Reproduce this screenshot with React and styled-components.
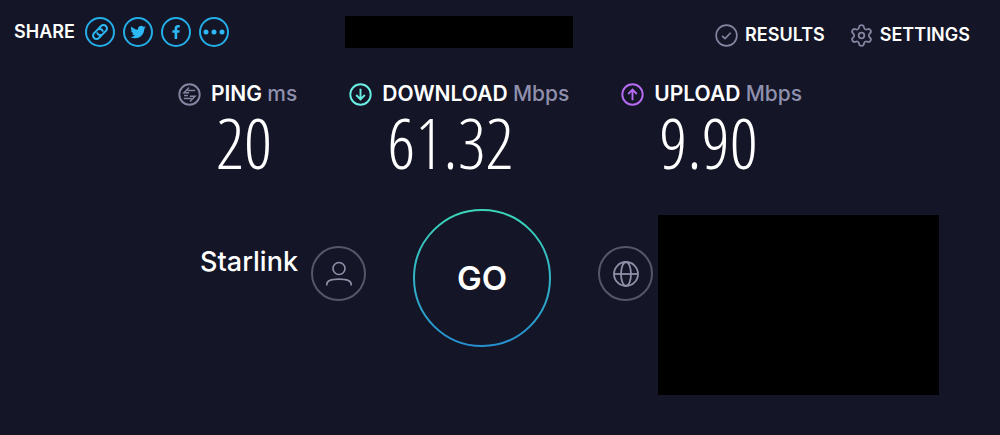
import React from "react";
import styled, { createGlobalStyle } from "styled-components";

const GlobalStyle = createGlobalStyle`
  * {
    box-sizing: border-box;
  }

  body {
    margin: 0;
    background-color: #141526;
    color: #fff;
    font-family: Inter, "Liberation Sans", sans-serif;
  }
`;

const shareLinks = [
  { label: "Copy link", icon: <LinkIcon /> },
  { label: "Twitter", icon: <TwitterIcon /> },
  { label: "Facebook", icon: <FacebookIcon /> },
  { label: "More", icon: <DotsIcon /> },
];

const metrics = [
  { name: "PING", unit: "ms", value: "20", color: "#8485a0", icon: <PingArrows /> },
  { name: "DOWNLOAD", unit: "Mbps", value: "61.32", color: "#6aefe3", icon: <DownArrow /> },
  { name: "UPLOAD", unit: "Mbps", value: "9.90", color: "#b56bf2", icon: <UpArrow /> },
];

export default function App() {
  return (
    <>
      <GlobalStyle />
      <Page>
        <Header>
          <Share>
            <ShareTitle>SHARE</ShareTitle>
            {shareLinks.map(({ label, icon }) => (
              <ShareButton key={label} type="button" aria-label={label}>
                {icon}
              </ShareButton>
            ))}
          </Share>
          <ResultId />
          <Nav>
            <NavLink href="#results">
              <CheckIcon />
              RESULTS
            </NavLink>
            <NavLink href="#settings">
              <GearIcon />
              SETTINGS
            </NavLink>
          </Nav>
        </Header>

        <Metrics>
          {metrics.map(({ name, unit, value, color, icon }) => (
            <Metric key={name}>
              <MetricLabel>
                <MetricIcon viewBox="0 0 23 23" $color={color}>
                  <circle cx="11.5" cy="11.5" r="10.2" />
                  {icon}
                </MetricIcon>
                <span>
                  {name} <Unit>{unit}</Unit>
                </span>
              </MetricLabel>
              <Value>{value}</Value>
            </Metric>
          ))}
        </Metrics>

        <Connection>
          <Provider>
            <ProviderName>Starlink</ProviderName>
            <Badge>
              <UserIcon />
            </Badge>
          </Provider>
          <GoButton type="button">
            <GoRing />
            GO
          </GoButton>
          <Server>
            <Badge>
              <GlobeIcon />
            </Badge>
            <ServerDetails />
          </Server>
        </Connection>
      </Page>
    </>
  );
}

function LinkIcon() {
  return (
    <svg width="30" height="30" viewBox="0 0 30 30" fill="none" stroke="currentColor">
      <g transform="rotate(-45 15 15)" strokeWidth="2" strokeLinecap="round">
        <path d="M13.5 18.4H10a3.4 3.4 0 0 1 0-6.8h4.6a3.4 3.4 0 0 1 3.1 4.6" />
        <path d="M16.5 11.6H20a3.4 3.4 0 0 1 0 6.8h-4.6a3.4 3.4 0 0 1-3.1-4.6" />
      </g>
    </svg>
  );
}

function TwitterIcon() {
  return (
    <svg width="30" height="30" viewBox="0 0 30 30" fill="currentColor">
      <path
        transform="translate(7.4 7.4) scale(.64)"
        d="M23.95 4.57a10 10 0 0 1-2.82.77 4.96 4.96 0 0 0 2.16-2.72c-.95.55-2 .95-3.13 1.18a4.92 4.92 0 0 0-8.38 4.48C7.69 8.1 4.07 6.13 1.64 3.16a4.92 4.92 0 0 0 1.52 6.57 4.9 4.9 0 0 1-2.23-.61v.06a4.92 4.92 0 0 0 3.95 4.83 5 5 0 0 1-2.21.08 4.94 4.94 0 0 0 4.6 3.42A9.87 9.87 0 0 1 0 19.54a14 14 0 0 0 7.55 2.21c9.05 0 14-7.5 14-13.98 0-.21 0-.42-.02-.63a9.94 9.94 0 0 0 2.42-2.57z"
      />
    </svg>
  );
}

function FacebookIcon() {
  return (
    <svg width="30" height="30" viewBox="0 0 30 30" fill="currentColor">
      <path d="M13.6 22v-6.2h-2.2v-2.5h2.2v-1.7c0-2.3 1.3-3.5 3.4-3.5.9 0 1.6.1 1.8.1v2.2h-1.3c-1 0-1.3.5-1.3 1.3v1.6h2.5l-.4 2.5h-2.1V22z" />
    </svg>
  );
}

function DotsIcon() {
  return (
    <svg width="30" height="30" viewBox="0 0 30 30" fill="currentColor">
      <circle cx="7" cy="15" r="2.5" />
      <circle cx="15" cy="15" r="2.5" />
      <circle cx="23" cy="15" r="2.5" />
    </svg>
  );
}

function CheckIcon() {
  return (
    <NavIcon viewBox="0 0 24 24">
      <circle cx="12" cy="12" r="10.8" />
      <path d="M7.4 12.4l3 2.9 6-6.2" />
    </NavIcon>
  );
}

function GearIcon() {
  return (
    <NavIcon viewBox="1 1 22 22">
      <circle cx="12" cy="12" r="2.7" />
      <path d="M9.67 4.14a2.34 2.34 0 0 1 4.66 0 2.34 2.34 0 0 0 3.32 1.91 2.34 2.34 0 0 1 2.33 4.03 2.34 2.34 0 0 0 0 3.84 2.34 2.34 0 0 1-2.33 4.03 2.34 2.34 0 0 0-3.32 1.91 2.34 2.34 0 0 1-4.66 0 2.34 2.34 0 0 0-3.32-1.91 2.34 2.34 0 0 1-2.33-4.03 2.34 2.34 0 0 0 0-3.84 2.34 2.34 0 0 1 2.33-4.03 2.34 2.34 0 0 0 3.32-1.91z" />
    </NavIcon>
  );
}

function PingArrows() {
  return (
    <g strokeWidth="1.5">
      <path d="M11 4.6L6 9.8h5.2M9.4 7.4h7.8" />
      <path d="M12 18.4l5-5.2h-5.2M13.6 15.6H5.8M6 12.5h4" />
    </g>
  );
}

function DownArrow() {
  return <path d="M11.5 5.8v10.6M7.2 12l4.3 4.3 4.3-4.3" />;
}

function UpArrow() {
  return <path d="M11.5 17.2V6.6M7.2 11l4.3-4.3 4.3 4.3" />;
}

function UserIcon() {
  return (
    <svg width="28" height="28" viewBox="0 0 28 28" fill="none" stroke="#8f90a8" strokeWidth="1.6">
      <circle cx="14" cy="8.5" r="6" />
      <path d="M1.8 25.5v-1.2c0-3.6 3.2-5.2 12.2-5.2s12.2 1.6 12.2 5.2v1.2" />
    </svg>
  );
}

function GlobeIcon() {
  return (
    <svg width="28" height="28" viewBox="0 0 28 28" fill="none" stroke="#8f90a8" strokeWidth="1.8">
      <circle cx="14" cy="14" r="12" />
      <ellipse cx="14" cy="14" rx="5" ry="12" />
      <path d="M2 14h24" />
    </svg>
  );
}

function GoRing() {
  return (
    <Ring viewBox="0 0 138 138">
      <defs>
        <linearGradient id="go-ring" x1="0" y1="0" x2="0" y2="1">
          <stop offset="0" stopColor="#3bd6b9" />
          <stop offset="1" stopColor="#2690d0" />
        </linearGradient>
      </defs>
      <circle cx="69" cy="69" r="68" fill="none" stroke="url(#go-ring)" strokeWidth="2" />
    </Ring>
  );
}

const Page = styled.main`
  min-height: 100vh;
  padding-bottom: 36px;
`;

const Header = styled.header`
  display: grid;
  grid-template-columns: 5fr 228px 6fr;
  align-items: start;
  padding: 16px 30px 0 14px;
`;

const Share = styled.div`
  display: flex;
  align-items: center;
  gap: 8px;
`;

const ShareTitle = styled.span`
  padding-right: 2px;
  font-size: 18px;
  line-height: 32px;
  font-weight: 600;
`;

const ShareButton = styled.button`
  display: flex;
  align-items: center;
  justify-content: center;
  width: 30px;
  height: 30px;
  padding: 0;
  border: 2px solid #24aee8;
  border-radius: 50%;
  background: none;
  color: #2cb9f5;
  cursor: pointer;

  svg {
    flex: none;
  }
`;

const ResultId = styled.div`
  height: 32px;
  background-color: #000;
`;

const Nav = styled.nav`
  display: flex;
  justify-content: flex-end;
  gap: 25px;
  padding-top: 3px;
`;

const NavLink = styled.a`
  display: flex;
  align-items: center;
  gap: 7px;
  color: #fff;
  font-size: 18px;
  line-height: 32px;
  font-weight: 600;
  text-decoration: none;
`;

const NavIcon = styled.svg`
  width: 23px;
  height: 23px;
  fill: none;
  stroke: #8485a0;
  stroke-width: 1.7;
  stroke-linejoin: round;
`;

const Metrics = styled.section`
  display: flex;
  justify-content: center;
  gap: 52px;
  padding: 27px 20px 0 0;
`;

const Metric = styled.div`
  display: flex;
  flex-direction: column;
`;

const MetricLabel = styled.div`
  display: flex;
  align-items: center;
  gap: 10px;
  font-size: 21px;
  line-height: 32px;
  font-weight: 600;
`;

const MetricIcon = styled.svg`
  width: 23px;
  height: 23px;
  fill: none;
  stroke: ${({ $color }) => $color};
  stroke-width: 1.9;
`;

const Unit = styled.span`
  color: #8f90ae;
  font-weight: 500;
`;

const Value = styled.strong`
  padding-left: 38px;
  font-family: "Open Sans Condensed Light", "Open Sans Condensed", "Open Sans", sans-serif;
  font-size: 70px;
  line-height: 64px;
  font-weight: 300;
`;

const Connection = styled.section`
  display: grid;
  grid-template-columns: 1fr 138px 1fr;
  column-gap: 47px;
  align-items: start;
  padding: 35px 36px 0 0;
`;

const Provider = styled.div`
  display: flex;
  justify-content: flex-end;
  gap: 13px;
  padding-top: 37px;
`;

const ProviderName = styled.span`
  font-size: 27px;
  line-height: 32px;
  font-weight: 500;
`;

const Badge = styled.span`
  display: flex;
  flex: none;
  align-items: center;
  justify-content: center;
  width: 55px;
  height: 55px;
  border: 2px solid #55566a;
  border-radius: 50%;
`;

const GoButton = styled.button`
  position: relative;
  width: 138px;
  height: 138px;
  padding: 0;
  border: 0;
  border-radius: 50%;
  background: none;
  color: #fff;
  font-family: inherit;
  font-size: 33px;
  font-weight: 600;
  cursor: pointer;
`;

const Ring = styled.svg`
  position: absolute;
  inset: 0;
`;

const Server = styled.div`
  display: flex;
  align-items: flex-start;
  gap: 5px;
  padding-top: 6px;

  ${Badge} {
    margin-top: 31px;
  }
`;

const ServerDetails = styled.div`
  flex: 1;
  max-width: 281px;
  height: 180px;
  background-color: #000;
`;
